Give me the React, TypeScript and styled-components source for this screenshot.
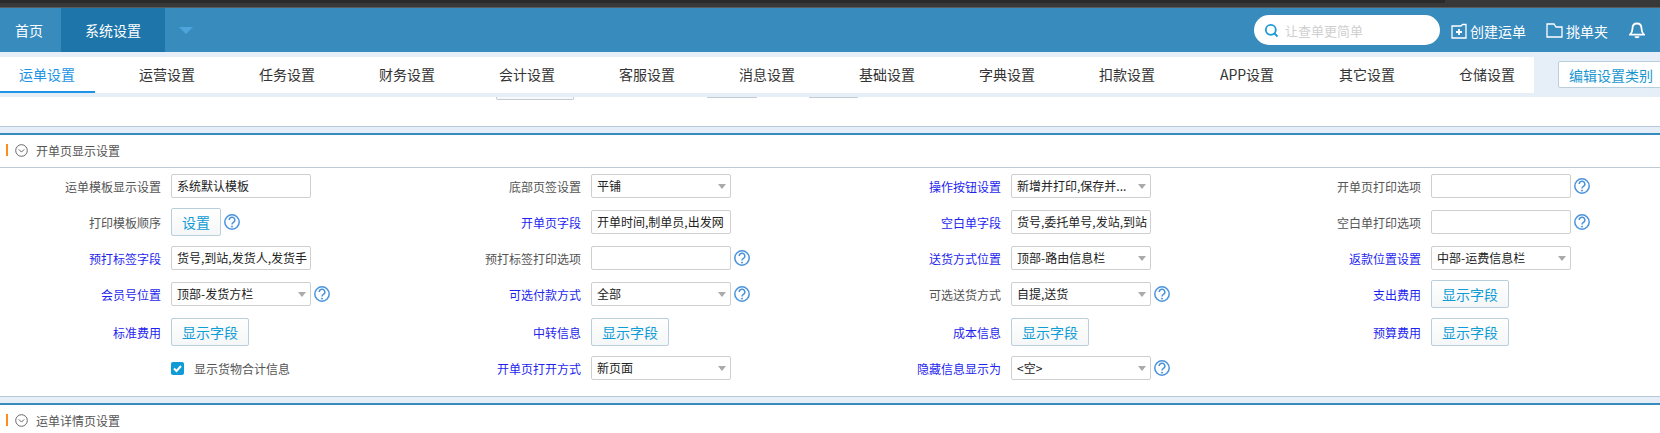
import React from "react";
import styled, { createGlobalStyle } from "styled-components";

const Global = createGlobalStyle`
  html, body { margin: 0; padding: 0; background: #fff; overflow: hidden; }
  body { font-family: "Noto Sans CJK SC", "Liberation Sans", sans-serif; font-size: 12px; }
`;
const Page = styled.div`width: 1660px; height: 433px; overflow: hidden; display: flex; flex-direction: column;`;
const Chrome = styled.div`height: 7px; background: #383838; border-bottom: 1px solid #5a5a5a; flex: none;`;
const ChromeTab = styled.div`height: 3px; width: 1445px; background: #2a2a2a;`;
const Nav = styled.div`height: 44px; flex: none; background: #388bbd; display: flex; align-items: center; color: #fff; font-size: 14px;`;
const NavItem = styled.div<{ $active?: boolean }>`
  height: 44px; display: flex; align-items: center; padding: 0 ${p => (p.$active ? "24px" : "18px 0 15px")};
  background: ${p => (p.$active ? "#1d75aa" : "transparent")};
`;
const NavArrow = styled.div`width: 0; height: 0; margin-left: 14px; border: 7px solid transparent; border-top: 7px solid #4ea5dc; border-bottom: 0;`;
const NavRight = styled.div`margin-left: auto; display: flex; align-items: center; padding-right: 15px;`;
const Search = styled.div`width: 186px; height: 30px; box-sizing: border-box; margin-right: 11px; padding-left: 10px; background: #fff; border-radius: 15px; display: flex; align-items: center; gap: 6px; color: #cfcfcf; font-size: 13px;`;
const Action = styled.div`display: flex; align-items: center; gap: 3px; margin-right: 20px; margin-top: 1px;`;
const Bell = styled.span`display: inline-flex; margin-right: 0; margin-left: 1px;`;
const TabBar = styled.div`height: 45px; flex: none; box-sizing: border-box; padding: 5px 0 4px; background: #e6eff7; display: flex;`;
const Tabs = styled.div`width: 1534px; flex: none; background: #fff; display: flex; gap: 25px;`;
const Tab = styled.div<{ $active?: boolean }>`
  width: 95px; height: 36px; box-sizing: border-box; flex: none; display: flex; align-items: center; justify-content: center;
  padding-right: 1px; font-size: 14px; color: ${p => (p.$active ? "#1d94e6" : "#333")};
  border-bottom: 2px solid ${p => (p.$active ? "#1d94e6" : "transparent")};
`;
const EditBtn = styled.div`
  flex: none; margin: 4px 0 0 24px; height: 27px; box-sizing: border-box; padding: 0 10px; white-space: nowrap;
  display: flex; align-items: center; font-size: 14px; color: #1a96cf; background: #fff; border: 1px solid #b9cfdc; border-radius: 2px;
`;
const Clipped = styled.div`height: 29px; flex: none; background: #fff; position: relative; border-bottom: 1px solid #b7c9d8; box-sizing: content-box;`;
const ClippedRow = styled.div`display: flex; padding-left: 496px;`;
const ClippedBtn = styled.div<{ $w: number; $ml: number; $h: number }>`
  width: ${p => p.$w}px; height: ${p => p.$h}px; margin-left: ${p => p.$ml}px; box-sizing: border-box; background: #f7f9fb;
  border: 1px solid #c3ccd4; border-top: 0; border-radius: 0 0 2px 2px;
`;
const Gap = styled.div`height: 6px; flex: none; background: #e6eff7;`;
const SectionHead = styled.div`
  height: 30px; flex: none; border-top: 2px solid #388bbd; border-bottom: 1px solid #bdcad5; display: flex; align-items: center;
  padding: 0 0 2px 6px; color: #555; font-size: 12px; box-sizing: content-box;
`;
const Mark = styled.div`width: 2px; height: 12px; background: #ff8c1a; margin-right: 7px;`;
const Title = styled.div`margin-left: 8px;`;
const Grid = styled.div`
  height: 229px; flex: none; box-sizing: border-box; display: grid; grid-template-columns: repeat(4, 420px);
  grid-template-rows: 36px 36px 36px 36px 40px 32px; border-bottom: 1px solid #b7c9d8;
`;
const Field = styled.div`display: flex; align-items: center;`;
const Label = styled.div<{ $link?: boolean }>`
  width: 161px; flex: none; text-align: right; white-space: nowrap; margin-right: 10px;
  color: ${p => (p.$link ? "#1f1fee" : "#555")};
`;
const Box = styled.div`
  width: 140px; height: 24px; flex: none; box-sizing: border-box; position: relative; background: #fff; color: #222;
  border: 1px solid #cfcfcf; border-radius: 2px; padding: 0 5px; line-height: 21px; white-space: nowrap; overflow: hidden;
`;
const Caret = styled.span`position: absolute; right: 4px; top: 9px; width: 0; height: 0; border: 4px solid transparent; border-top: 5px solid #aaa; border-bottom: 0;`;
const Btn = styled.div<{ $w: number }>`
  width: ${p => p.$w}px; height: 28px; flex: none; box-sizing: border-box; display: flex; align-items: center; justify-content: center;
  font-size: 14px; color: #0e9bd6; background: linear-gradient(#fff, #f5f6f7); border: 1px solid #b9cfdc; border-radius: 2px;
`;
const HelpWrap = styled.span`display: inline-flex; margin-left: 3px;`;
const CheckWrap = styled.div`margin-left: 171px; display: flex; align-items: center; gap: 10px; color: #555;`;
const Check = styled.span`width: 13px; height: 13px; border-radius: 2px; background: #0e9bd6; display: flex; align-items: center; justify-content: center;`;

const Help = () => (
  <HelpWrap>
    <svg width="16" height="16" viewBox="0 0 16 16" fill="none" stroke="#4a93dc">
      <circle cx="8" cy="8" r="7.2" strokeWidth="1.5" />
      <path d="M5.2 6a2.8 2.8 0 1 1 4.2 2.4c-.9.5-1.4 1-1.4 2.2" strokeWidth="1.5" />
      <circle cx="8" cy="12.6" r=".6" strokeWidth="1" fill="#4a93dc" />
    </svg>
  </HelpWrap>
);

type F =
  | { l: string; link?: boolean; t: "input" | "select"; v?: string; help?: boolean }
  | { l: string; link?: boolean; t: "btn"; v: string; help?: boolean };

const fields: F[] = [
  { l: "运单模板显示设置", t: "input", v: "系统默认模板" },
  { l: "底部页签设置", t: "select", v: "平铺" },
  { l: "操作按钮设置", link: true, t: "select", v: "新增并打印,保存并..." },
  { l: "开单页打印选项", t: "input", help: true },
  { l: "打印模板顺序", t: "btn", v: "设置", help: true },
  { l: "开单页字段", link: true, t: "input", v: "开单时间,制单员,出发网" },
  { l: "空白单字段", link: true, t: "input", v: "货号,委托单号,发站,到站" },
  { l: "空白单打印选项", t: "input", help: true },
  { l: "预打标签字段", link: true, t: "input", v: "货号,到站,发货人,发货手" },
  { l: "预打标签打印选项", t: "input", help: true },
  { l: "送货方式位置", link: true, t: "select", v: "顶部-路由信息栏" },
  { l: "返款位置设置", link: true, t: "select", v: "中部-运费信息栏" },
  { l: "会员号位置", link: true, t: "select", v: "顶部-发货方栏", help: true },
  { l: "可选付款方式", link: true, t: "select", v: "全部", help: true },
  { l: "可选送货方式", t: "select", v: "自提,送货", help: true },
  { l: "支出费用", link: true, t: "btn", v: "显示字段" },
  { l: "标准费用", link: true, t: "btn", v: "显示字段" },
  { l: "中转信息", link: true, t: "btn", v: "显示字段" },
  { l: "成本信息", link: true, t: "btn", v: "显示字段" },
  { l: "预算费用", link: true, t: "btn", v: "显示字段" },
];
const lastRow: F[] = [
  { l: "开单页打开方式", link: true, t: "select", v: "新页面" },
  { l: "隐藏信息显示为", link: true, t: "select", v: "<空>", help: true },
];

const Item = ({ f }: { f: F }) => (
  <Field>
    <Label $link={f.link}>{f.l}</Label>
    {f.t === "btn" ? (
      <Btn $w={f.v.length === 2 ? 50 : 78}>{f.v}</Btn>
    ) : (
      <Box>
        {f.v}
        {f.t === "select" && <Caret />}
      </Box>
    )}
    {f.help && <Help />}
  </Field>
);

const Chevron = () => (
  <svg width="13" height="13" viewBox="0 0 13 13" fill="none" stroke="#666" strokeWidth="1">
    <circle cx="6.5" cy="6.5" r="5.8" />
    <path d="M3.8 5.4l2.7 2.7 2.7-2.7" />
  </svg>
);

const tabNames = ["运单设置", "运营设置", "任务设置", "财务设置", "会计设置", "客服设置", "消息设置", "基础设置", "字典设置", "扣款设置", "APP设置", "其它设置", "仓储设置"];

export default function App() {
  return (
    <Page>
      <Global />
      <Chrome><ChromeTab /></Chrome>
      <Nav>
        <NavItem>首页</NavItem>
        <NavItem $active>系统设置</NavItem>
        <NavArrow />
        <NavRight>
          <Search>
            <svg width="15" height="15" viewBox="0 0 15 15" fill="none" stroke="#1d9ad6" strokeWidth="1.8">
              <circle cx="6.8" cy="6.8" r="5" />
              <path d="M10.5 10.5l3 3" />
            </svg>
            让查单更简单
          </Search>
          <Action>
            <svg width="16" height="16" viewBox="0 0 16 16" fill="none" stroke="#fff" strokeWidth="1.3">
              <path d="M1 3h9l1.5-1.5H15V15H1z" />
              <path d="M8 6v6M5 9h6" strokeWidth="1.8" />
            </svg>
            创建运单
          </Action>
          <Action>
            <svg width="17" height="15" viewBox="0 0 17 15" fill="none" stroke="#fff" strokeWidth="1.3">
              <path d="M1 1h7l2 3h6v10H1z" />
            </svg>
            挑单夹
          </Action>
          <Bell>
            <svg width="16" height="17" viewBox="0 0 16 17" fill="none" stroke="#fff" strokeWidth="1.8">
              <path d="M8 1.5c-3 0-4.5 2.3-4.5 5 0 3-1 4.7-2.5 6.2h14c-1.5-1.5-2.5-3.2-2.5-6.2 0-2.7-1.5-5-4.5-5z" />
              <path d="M6 14.5c.4 1 3.6 1 4 0" />
            </svg>
          </Bell>
        </NavRight>
      </Nav>
      <TabBar>
        <Tabs>
          {tabNames.map((t, i) => (
            <Tab key={t} $active={i === 0}>{t}</Tab>
          ))}
        </Tabs>
        <EditBtn>编辑设置类别</EditBtn>
      </TabBar>
      <Clipped>
        <ClippedRow>
          <ClippedBtn $w={78} $ml={0} $h={3} />
          <ClippedBtn $w={50} $ml={133} $h={1} />
          <ClippedBtn $w={49} $ml={52} $h={1} />
        </ClippedRow>
      </Clipped>
      <Gap />
      <SectionHead>
        <Mark />
        <Chevron />
        <Title>开单页显示设置</Title>
      </SectionHead>
      <Grid>
        {fields.map(f => (
          <Item key={f.l} f={f} />
        ))}
        <Field>
          <CheckWrap>
            <Check>
              <svg width="11" height="11" viewBox="0 0 11 11" fill="none" stroke="#fff" strokeWidth="2">
                <path d="M2 5.5l2.5 2.5L9 3" />
              </svg>
            </Check>
            显示货物合计信息
          </CheckWrap>
        </Field>
        {lastRow.map(f => (
          <Item key={f.l} f={f} />
        ))}
      </Grid>
      <Gap />
      <SectionHead>
        <Mark />
        <Chevron />
        <Title>运单详情页设置</Title>
      </SectionHead>
    </Page>
  );
}
